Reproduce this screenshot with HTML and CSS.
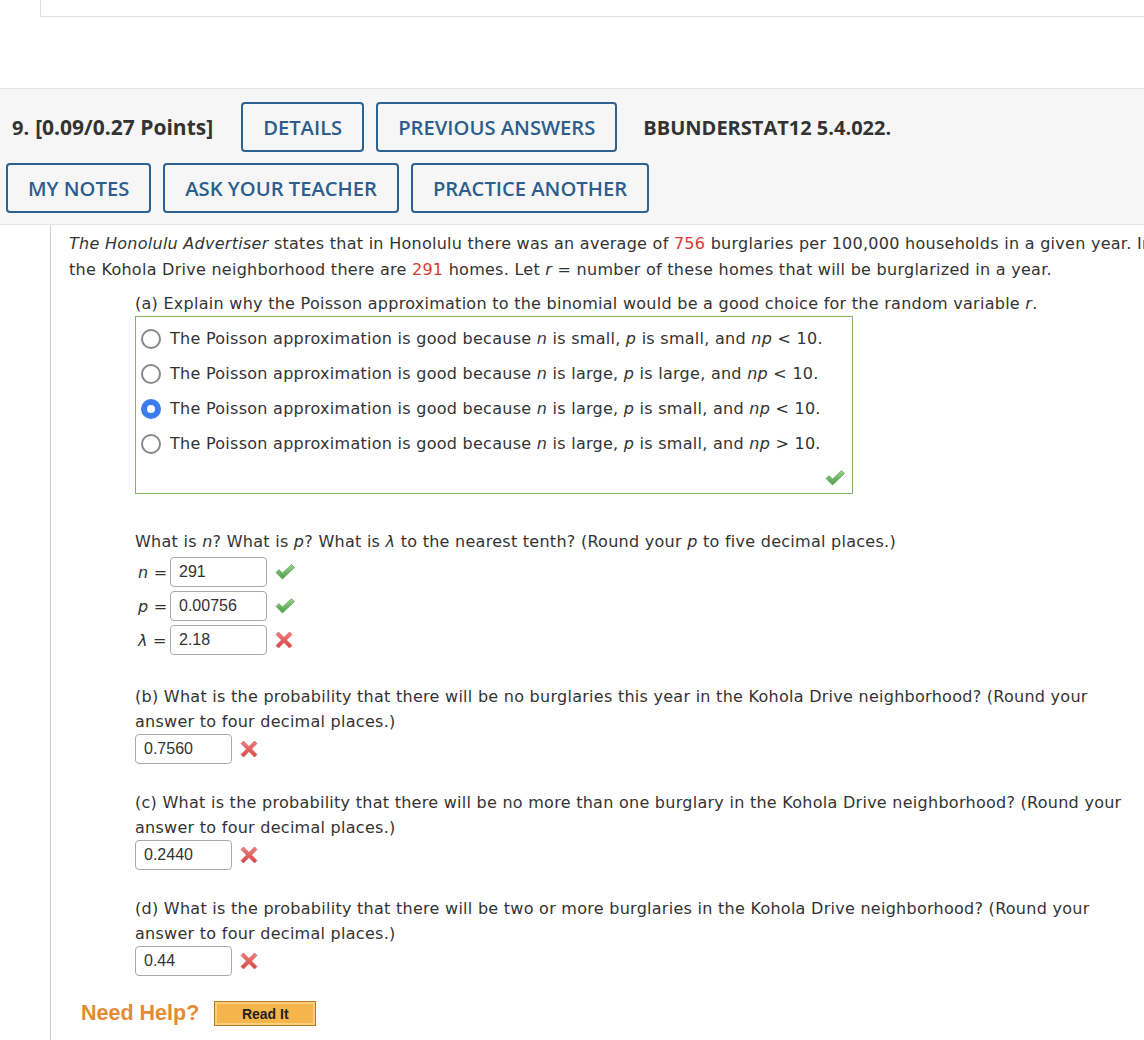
FILE: index.html
```html
<!DOCTYPE html>
<html lang="en">
<head>
    <meta charset="UTF-8">
    <title>BBUNDERSTAT12 5.4.022</title>
    <link rel="stylesheet" href="styles.css">
</head>
<body>
    <div class="page">
        <div class="prev-question"></div>

        <div class="q-header">
            <div class="q-row">
                <span class="q-num">9.</span>
                <span class="q-points">[0.09/0.27 Points]</span>
                <button class="q-btn">DETAILS</button>
                <button class="q-btn">PREVIOUS ANSWERS</button>
                <span class="q-ref">BBUNDERSTAT12 5.4.022.</span>
            </div>
            <div class="q-row">
                <button class="q-btn">MY NOTES</button>
                <button class="q-btn">ASK YOUR TEACHER</button>
                <button class="q-btn">PRACTICE ANOTHER</button>
            </div>
        </div>

        <div class="q-body">
            <p class="intro"><i>The Honolulu Advertiser</i> states that in Honolulu there was an average of <span class="red">756</span> burglaries per 100,000 households in a given year. In the Kohola Drive neighborhood there are <span class="red">291</span> homes. Let <i>r</i> = number of these homes that will be burglarized in a year.</p>

            <div class="part">
                <p>(a) Explain why the Poisson approximation to the binomial would be a good choice for the random variable <i>r</i>.</p>
                <div class="choices">
                    <label class="choice"><input type="radio" name="a"><span>The Poisson approximation is good because <i>n</i> is small, <i>p</i> is small, and <i>np</i> &lt; 10.</span></label>
                    <label class="choice"><input type="radio" name="a"><span>The Poisson approximation is good because <i>n</i> is large, <i>p</i> is large, and <i>np</i> &lt; 10.</span></label>
                    <label class="choice"><input type="radio" name="a" checked><span>The Poisson approximation is good because <i>n</i> is large, <i>p</i> is small, and <i>np</i> &lt; 10.</span></label>
                    <label class="choice"><input type="radio" name="a"><span>The Poisson approximation is good because <i>n</i> is large, <i>p</i> is small, and <i>np</i> &gt; 10.</span></label>
                    <svg class="icon-ok choices-ok" viewBox="0 0 20 16"><use href="#check"/></svg>
                </div>

                <p class="sub first">What is <i>n</i>? What is <i>p</i>? What is <i>λ</i> to the nearest tenth? (Round your <i>p</i> to five decimal places.)</p>
                <div class="fields">
                    <div class="field">
                        <span class="var"><i>n</i> =</span>
                        <input class="answer" type="text" value="291">
                        <svg class="icon-ok" viewBox="0 0 20 16"><use href="#check"/></svg>
                    </div>
                    <div class="field">
                        <span class="var"><i>p</i> =</span>
                        <input class="answer" type="text" value="0.00756">
                        <svg class="icon-ok" viewBox="0 0 20 16"><use href="#check"/></svg>
                    </div>
                    <div class="field">
                        <span class="var"><i>λ</i> =</span>
                        <input class="answer" type="text" value="2.18">
                        <svg class="icon-bad" viewBox="0 0 18 18"><use href="#cross"/></svg>
                    </div>
                </div>

                <p class="sub">(b) What is the probability that there will be no burglaries this year in the Kohola Drive neighborhood? (Round your answer to four decimal places.)</p>
                <div class="field">
                    <input class="answer" type="text" value="0.7560">
                    <svg class="icon-bad" viewBox="0 0 18 18"><use href="#cross"/></svg>
                </div>

                <p class="sub">(c) What is the probability that there will be no more than one burglary in the Kohola Drive neighborhood? (Round your answer to four decimal places.)</p>
                <div class="field">
                    <input class="answer" type="text" value="0.2440">
                    <svg class="icon-bad" viewBox="0 0 18 18"><use href="#cross"/></svg>
                </div>

                <p class="sub">(d) What is the probability that there will be two or more burglaries in the Kohola Drive neighborhood? (Round your answer to four decimal places.)</p>
                <div class="field">
                    <input class="answer" type="text" value="0.44">
                    <svg class="icon-bad" viewBox="0 0 18 18"><use href="#cross"/></svg>
                </div>
            </div>

            <div class="help">
                <span class="help-title">Need Help?</span>
                <button class="read-it">Read It</button>
            </div>
        </div>
    </div>

    <svg class="defs" width="0" height="0">
        <defs>
            <linearGradient id="g-ok" x1="0" y1="0" x2="0" y2="1">
                <stop offset="0" stop-color="#9ad58f"/>
                <stop offset="1" stop-color="#4c9e45"/>
            </linearGradient>
            <linearGradient id="g-bad" x1="0" y1="0" x2="0" y2="1">
                <stop offset="0" stop-color="#f07f7f"/>
                <stop offset="1" stop-color="#d94444"/>
            </linearGradient>
            <symbol id="check" viewBox="0 0 20 16">
                <path d="M1 8.5 L4 5.5 L7.5 9 L16.5 0.5 L19.5 3.5 L7.5 15 Z" fill="url(#g-ok)" stroke="#4a9a44" stroke-width="0.6" stroke-linejoin="round"/>
            </symbol>
            <symbol id="cross" viewBox="0 0 18 18">
                <path d="M3.5 1 L9 6.5 L14.5 1 L17 3.5 L11.5 9 L17 14.5 L14.5 17 L9 11.5 L3.5 17 L1 14.5 L6.5 9 L1 3.5 Z" fill="url(#g-bad)" stroke="#d24a4a" stroke-width="0.6" stroke-linejoin="round"/>
            </symbol>
        </defs>
    </svg>
</body>
</html>
```

FILE: styles.css
```css
html, body {
    margin: 0;
    overflow: hidden;
}
body {
    font-family: "DejaVu Sans", Verdana, sans-serif;
    font-size: 16px;
    letter-spacing: 0.27px;
    color: #333;
    background: #fff;
}
.page {
    width: 1240px;
}
.prev-question {
    margin-left: 40px;
    height: 16px;
    border-left: 1px solid #ddd;
    border-bottom: 1px solid #ddd;
    margin-bottom: 71px;
}
.defs {
    position: absolute;
}

/* question header */
.q-header {
    background-color: #f6f6f6;
    border-top: 1px solid #e4e4e4;
    border-bottom: 1px solid #e4e4e4;
    padding: 13px 6px 11px;
    font-family: "Open Sans", sans-serif;
    letter-spacing: 0;
}
.q-row {
    display: flex;
    align-items: center;
    gap: 12px;
}
.q-row + .q-row {
    margin-top: 11px;
}
.q-num {
    font-weight: 700;
    font-size: 20px;
    margin-left: 6px;
    color: #333;
}
.q-points {
    font-weight: 700;
    font-size: 21px;
    margin-left: -6px;
    margin-right: 16px;
    color: #333;
}
.q-ref {
    font-weight: 700;
    font-size: 20px;
    margin-left: 14px;
    color: #333;
}
.q-btn {
    font-family: "Open Sans", sans-serif;
    font-size: 20.2px;
    font-weight: 600;
    color: #2d5e8e;
    background: #f6f6f6;
    border: 2px solid #2e6291;
    border-radius: 4px;
    height: 50px;
    padding: 0 20px;
}

/* question body */
.q-body {
    margin-left: 50px;
    border-left: 1px solid #ccc;
    padding: 6px 0 20px 18px;
    line-height: 25px;
}
.q-body p {
    margin: 0;
}
.q-body .intro {
    width: 1100px;
    line-height: 26px;
}
.red {
    color: #d43c32;
}
.part {
    margin-left: 66px;
    margin-top: 8px;
    width: 1015px;
}
.choices {
    position: relative;
    width: 718px;
    height: 178px;
    border: 1px solid #84b565;
    padding-top: 4px;
    box-sizing: border-box;
}
.choice {
    display: flex;
    align-items: center;
    height: 35px;
    white-space: nowrap;
}
.choice input {
    appearance: none;
    width: 20px;
    height: 20px;
    margin: 0 9px 0 5px;
    border: 2px solid #888;
    border-radius: 50%;
    box-sizing: border-box;
    background: #fff;
}
.choice input:checked {
    border: 6px solid #3a7cf0;
    background: #fff;
}
.choices-ok {
    position: absolute;
    right: 7px;
    bottom: 7px;
}
.icon-ok {
    width: 20px;
    height: 16px;
}
.icon-bad {
    width: 18px;
    height: 18px;
}
.part .sub {
    margin-top: 26px;
}
.part .sub.first {
    margin-top: 35px;
}
.fields {
    display: flex;
    flex-direction: column;
    gap: 4px;
    padding: 3px 0;
}
.field {
    display: flex;
    align-items: center;
    height: 30px;
}
.var {
    width: 35px;
    padding-left: 3px;
    box-sizing: border-box;
    white-space: nowrap;
}
.answer {
    font-family: "Liberation Sans", Arial, sans-serif;
    font-size: 16px;
    letter-spacing: 0;
    color: #333;
    width: 97px;
    height: 30px;
    box-sizing: border-box;
    border: 1px solid #a9a9a9;
    border-radius: 4px;
    padding: 0 8px;
    margin-right: 8px;
}

/* help */
.help {
    display: flex;
    align-items: center;
    gap: 15px;
    margin-top: 25px;
    margin-left: 12px;
    letter-spacing: 0;
}
.help-title {
    font-family: "Liberation Sans", Arial, sans-serif;
    font-weight: 700;
    font-size: 21.5px;
    color: #e48a35;
}
.read-it {
    font-family: "Liberation Sans", Arial, sans-serif;
    font-weight: 700;
    font-size: 14px;
    color: #222;
    width: 102px;
    height: 25px;
    background: #f5b54a;
    border: 1px solid #b97a26;
    box-shadow: inset 0 0 0 2px #f9cf7d;
}
```
